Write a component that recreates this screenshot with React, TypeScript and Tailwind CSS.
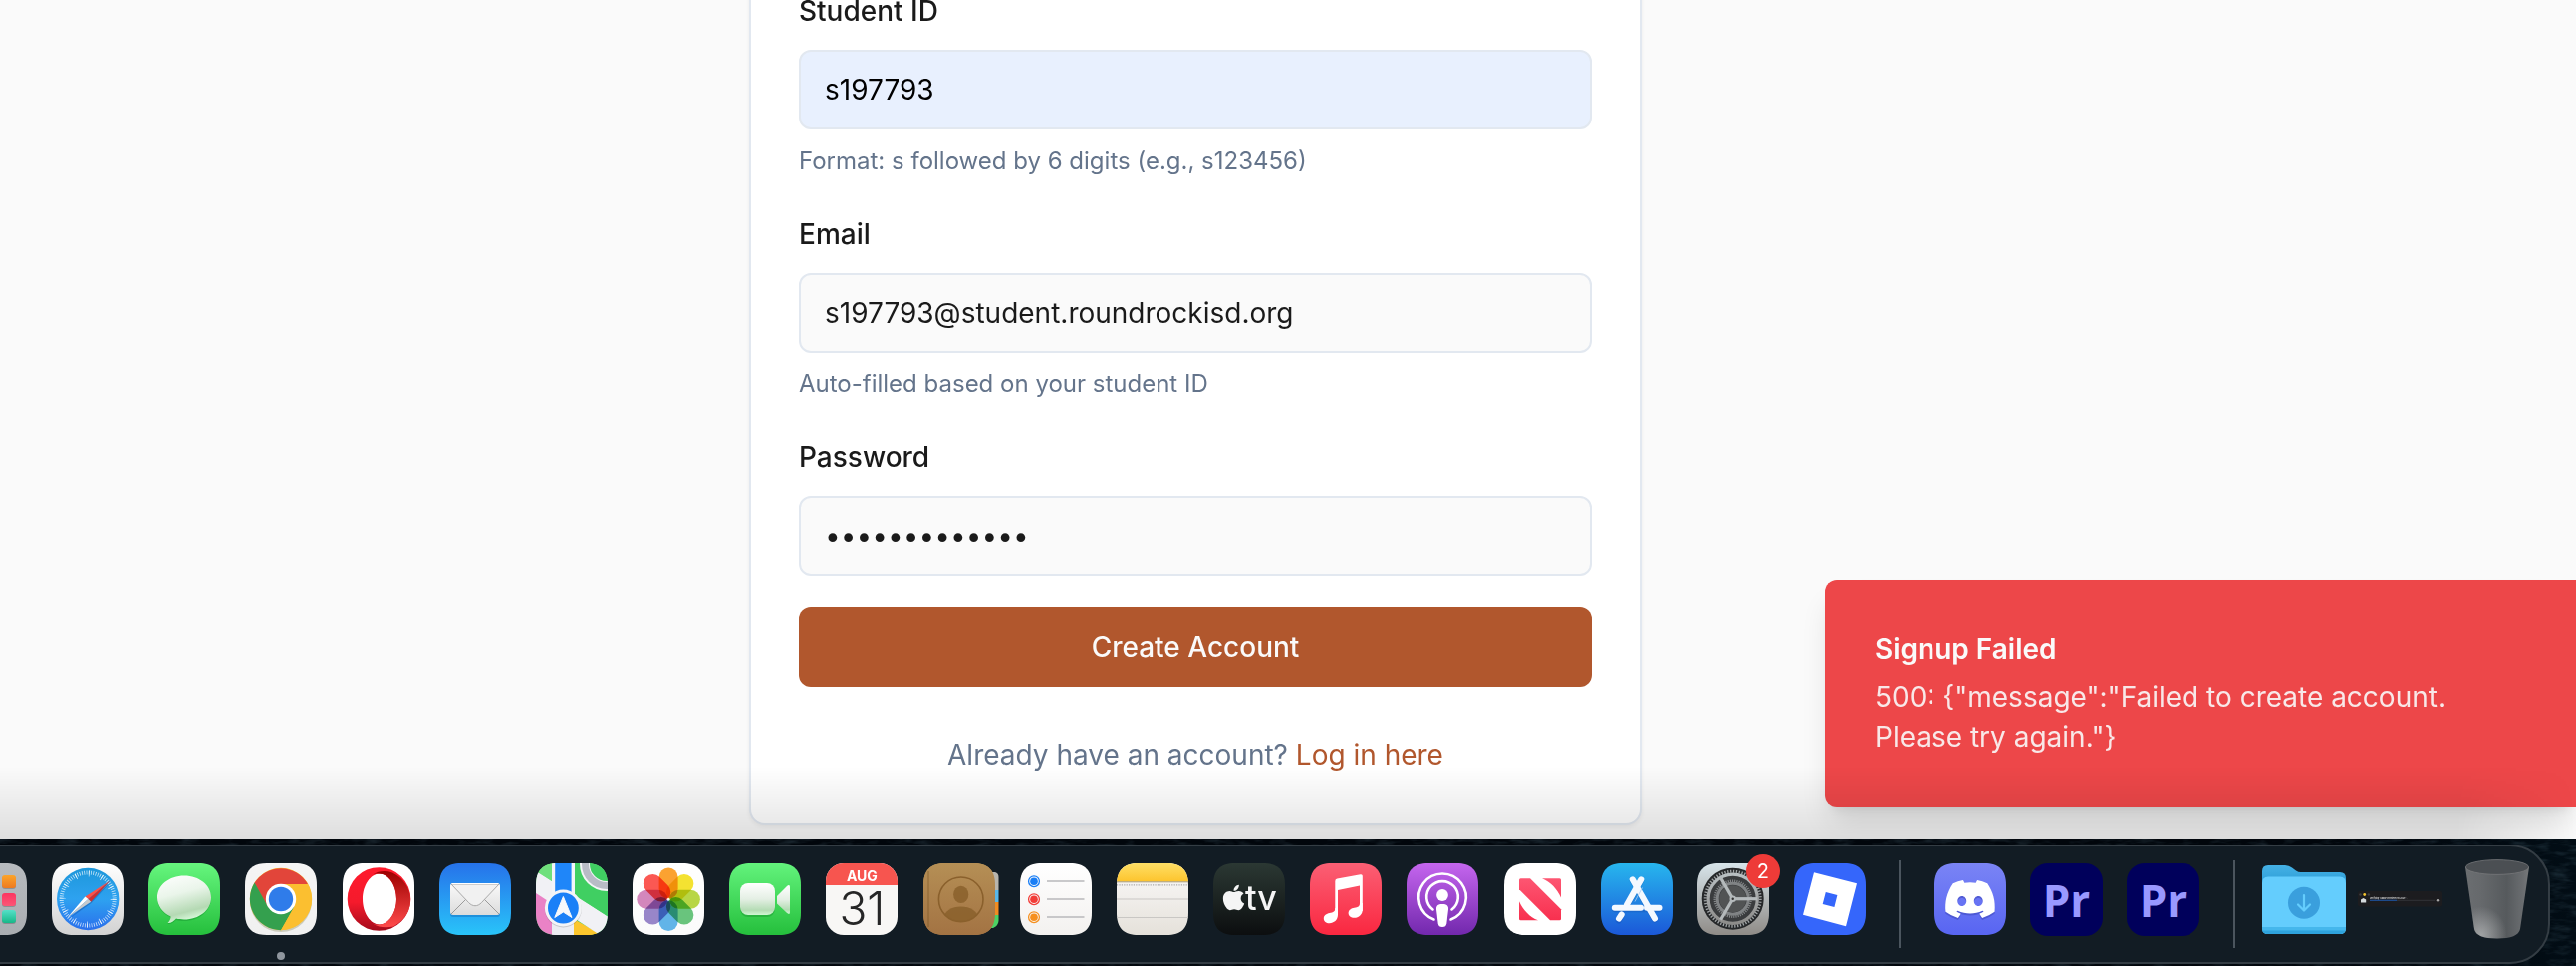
import type { ReactNode } from "react";
import { FaApple, FaDiscord } from "react-icons/fa";

const squircle =
  "M22 0H50C65 0 72 7 72 22V50C72 65 65 72 50 72H22C7 72 0 65 0 50V22C0 7 7 0 22 0Z";

function Grad({ id, from, to, mid }: { id: string; from: string; to: string; mid?: string }) {
  return (
    <linearGradient id={id} x1="0" y1="0" x2="0" y2="1">
      <stop offset="0" stopColor={from} />
      {mid && <stop offset="0.5" stopColor={mid} />}
      <stop offset="1" stopColor={to} />
    </linearGradient>
  );
}

function Tile({ id, from, to, children }: { id: string; from: string; to: string; children?: ReactNode }) {
  return (
    <svg viewBox="0 0 72 72" className="block size-[72px] overflow-visible" aria-hidden="true">
      <defs>
        <Grad id={`${id}-bg`} from={from} to={to} />
        <clipPath id={`${id}-clip`}>
          <path d={squircle} />
        </clipPath>
      </defs>
      <path d={squircle} fill={`url(#${id}-bg)`} />
      {children}
    </svg>
  );
}

function DockItem({ name, children }: { name: string; children: ReactNode }) {
  return (
    <button type="button" aria-label={name} className="relative block shrink-0">
      {children}
    </button>
  );
}

function Launchpad() {
  const cells = [
    ["#4fb3ff", "#2f7df0", 11, 12], ["#6be06f", "#2fb84a", 29, 12], ["#fba42a", "#ee7a1f", 47, 12],
    ["#f0f0f0", "#cfcfcf", 11, 30], ["#b07cf5", "#7b45dc", 29, 30], ["#fb3560", "#fb5676", 47, 30],
    ["#ff6b5c", "#e83a30", 11, 47], ["#ffd84d", "#f5b81e", 29, 47], ["#55e0c8", "#17b888", 47, 47],
  ] as const;
  return (
    <Tile id="lp" from="#b7bbbf" to="#a9adb1">
      {cells.map(([a, b, x, y], i) => (
        <g key={i}>
          <Grad id={`lp${i}`} from={a} to={b} />
          <rect x={x} y={y + 1} width="14" height="13" rx="3" fill="#000" opacity=".2" />
          <rect x={x} y={y} width="14" height="13" rx="3" fill={`url(#lp${i})`} />
        </g>
      ))}
    </Tile>
  );
}

function Safari() {
  return (
    <Tile id="sf" from="#ffffff" to="#d2d2d2">
      <Grad id="sf1" from="#1d97da" mid="#2ea2f0" to="#2a6fec" />
      <circle cx="36.2" cy="36" r="31.2" fill="url(#sf1)" />
      <circle cx="36.2" cy="36" r="26.5" fill="none" stroke="#fff" strokeOpacity=".75" strokeWidth="4" strokeDasharray="0.8 1.51" />
      <circle cx="36.2" cy="36" r="25.5" fill="none" stroke="#fff" strokeOpacity=".8" strokeWidth="6" strokeDasharray="0.8 12.55" />
      <path d="M17 56L39.5 40 59 19Z" fill="#0a3f8f" opacity=".35" />
      <path d="M58.4 17.6L33.4 33.4 36.4 36Z" fill="#ff5148" />
      <path d="M58.4 17.6L36.4 36 39.2 38.8Z" fill="#cf3030" />
      <path d="M15.6 54.6L33.4 33.4 36.4 36Z" fill="#ffffff" />
      <path d="M15.6 54.6L36.4 36 39.2 38.8Z" fill="#c6c9cc" />
    </Tile>
  );
}

function Messages() {
  return (
    <Tile id="ms" from="#66f67e" to="#25bf3c">
      <linearGradient id="ms1" x1="0" y1="0" x2=".3" y2="1">
        <stop offset="0" stopColor="#fff" />
        <stop offset=".45" stopColor="#eaf5ea" />
        <stop offset=".85" stopColor="#b4d9b3" />
        <stop offset="1" stopColor="#d4f5d6" />
      </linearGradient>
      <path d="M36 14C51 14 63 23 63 35.500S51 58 36 58C33 58 30 57.600 28 57C25.500 59.500 22.500 61.500 19.500 61C21.500 59 22.600 56.500 22.600 54.600C14.500 51 9 43.500 9 35.500C9 23 21 14 36 14Z" fill="#0a7a22" opacity=".3" />
      <path d="M36 12.500C51 12.500 63 22 63 34.500S51 56.500 36 56.500C33 56.500 30 56.200 28 55.600C25.500 58.500 22.500 60.400 19.500 60C21.500 58 22.600 55.500 22.600 53.500C14.500 50 9 42.500 9 34.500C9 22 21 12.500 36 12.500Z" fill="url(#ms1)" />
    </Tile>
  );
}

function Chrome() {
  return (
    <Tile id="ch" from="#f5f5f5" to="#f0f0f0">
      <circle cx="36" cy="38" r="31" fill="#5b5b20" opacity=".25" />
      <circle cx="36" cy="36" r="31.200" fill="#fbbf30" />
      <path d="M36 21H62.900A31.200 31.200 0 0 0 9.200 20.200L23 44Z" fill="#e2453a" />
      <path d="M9.600 19.500A31.200 31.200 0 0 0 36 67.200L49.500 43.500 36 46 23 43.500Z" fill="#34a04e" />
      <path d="M36 67.200L49.500 43.500A15 15 0 0 0 49 29L36 21H63A31.200 31.200 0 0 1 36 67.200Z" fill="#fbbf30" />
      <circle cx="36" cy="36" r="15.200" fill="#fff" />
      <circle cx="36" cy="36" r="12.200" fill="#2f7cea" />
    </Tile>
  );
}

function Opera() {
  return (
    <Tile id="op" from="#ffffff" to="#ffffff">
      <linearGradient id="op1" x1="0" y1="0" x2="0" y2="1">
        <stop offset="0" stopColor="#ff1b2d" />
        <stop offset=".55" stopColor="#f51a2c" />
        <stop offset="1" stopColor="#a40a1b" />
      </linearGradient>
      <Grad id="op2" from="#9c0000" to="#ff4b4b" />
      <path fillRule="evenodd" fill="url(#op1)" d="M36.500 4.200A31.800 31.800 0 1 0 36.500 67.800A31.800 31.800 0 1 0 36.500 4.200ZM37 10.500C46 10.500 54 22 54 36S46 61.500 37 61.500S20 50 20 36S28 10.500 37 10.500Z" />
      <path fill="url(#op2)" d="M30 11.500C36 7.500 43 7.200 50 9.500C72 20 76 50 51 63.600C43 65 36 64.500 30 60.500C33 62 37 62 40 61C48 58.500 54 48.500 54 36S48 13.500 40 11C37 10.200 33 10 30 11.500Z" />
    </Tile>
  );
}

function Mail() {
  return (
    <Tile id="ml" from="#2672ea" to="#29c4f9">
      <Grad id="ml1" from="#fafafa" to="#dcdcdc" />
      <rect x="11" y="22" width="50" height="32" rx="3" fill="#0b4da0" opacity=".3" />
      <rect x="11" y="20" width="50" height="32" rx="3" fill="url(#ml1)" />
      <path d="M12 51L28 35M60 51L44 35" stroke="#9b9b9b" strokeWidth="1" />
      <path d="M12 21L29.500 39.500C33.500 43.800 38.500 43.800 42.500 39.500L60 21Z" fill="#f1f1f1" stroke="#a9a9a9" strokeWidth="1" />
      <path d="M12.500 20.500H59.500" stroke="#fff" strokeWidth="1" />
    </Tile>
  );
}

function Maps() {
  return (
    <Tile id="mp" from="#7be487" to="#34c759">
      <g clipPath="url(#mp-clip)">
        <path d="M0 26L20 40V72H0Z" fill="#ea82c6" />
        <path d="M38 56L66 72H38Z" fill="#fcc62d" />
        <path d="M0 8L16 18 72 53V72H64L0 30Z" fill="#f1f1f5" />
        <path d="M0 0H16V18L0 7.500Z" fill="#6fe07c" />
        <path d="M39 0H72V53.500L39 32Z" fill="#40cf62" />
        <path d="M16 36H39V72H16Z" fill="#ecedf2" />
        <path d="M38 58V72H64Z" fill="#fcc62d" />
        <path d="M16 0H39V40H16Z" fill="#f3f4f8" />
        <path d="M19.200 0H35.600V40H19.200Z" fill="#1f86f9" />
        <circle cx="71" cy="1" r="22" fill="none" stroke="#f3f4f6" strokeWidth="10" />
        <circle cx="71" cy="1" r="21.500" fill="none" stroke="#b9bcc6" strokeWidth="7" />
        <circle cx="27.400" cy="46" r="18.500" fill="#333" opacity=".2" />
      </g>
      <circle cx="27.400" cy="45" r="18.500" fill="#f3f4f7" />
      <circle cx="27.400" cy="45" r="15.400" fill="#1b80f7" />
      <path d="M27.400 33.500L36 54.500 27.400 49 18.800 54.500Z" fill="#f6f8fb" strokeLinejoin="round" stroke="#f6f8fb" strokeWidth="1" />
    </Tile>
  );
}

function Photos() {
  const petals = ["#fb9a1f", "#f3e01f", "#b2d235", "#5cbf72", "#55aee6", "#8f7cc4", "#cf7db6", "#fb4a44"];
  return (
    <Tile id="ph" from="#ffffff" to="#fbfbfb">
      <g className="isolate">
        {petals.map((c, i) => (
          <rect key={c} x="26.600" y="4.500" width="19" height="31" rx="9.500" fill={c} fillOpacity=".92" transform={`rotate(${i * 45} 36.100 36.300)`} className="mix-blend-multiply" />
        ))}
      </g>
      <circle cx="36.100" cy="36.300" r="1.500" fill="#fff" opacity=".8" />
    </Tile>
  );
}

function FaceTime() {
  return (
    <Tile id="ft" from="#63f37c" to="#25bf3c">
      <linearGradient id="ft1" x1="0" y1="0" x2="0" y2="1">
        <stop offset="0" stopColor="#fff" />
        <stop offset=".5" stopColor="#e4efe4" />
        <stop offset=".85" stopColor="#b4dcb4" />
        <stop offset="1" stopColor="#cff7d3" />
      </linearGradient>
      <rect x="11" y="22" width="35" height="32" rx="8" fill="#0a7a22" opacity=".3" />
      <rect x="11" y="20" width="35" height="32" rx="8" fill="url(#ft1)" />
      <path d="M48 33L57.500 23.500Q61 20.500 61 24V49Q61 52.500 57.500 49.500L48 40.500Z" fill="url(#ft1)" />
    </Tile>
  );
}

function CalendarIcon() {
  return (
    <div className="flex size-[72px] flex-col overflow-hidden rounded-[18px] bg-[#f8f7f5] text-center">
      <div className="h-[22px] bg-[#f7554f] pt-[3px] text-[14px] leading-[20px] font-bold text-white">AUG</div>
      <div className="pt-[1px] text-[46px] leading-[44px] font-light text-[#262626]">31</div>
    </div>
  );
}

function Contacts() {
  return (
    <Tile id="ct" from="#b58f55" to="#a37343">
      <path d="M66 9H72Q75.500 10 75.500 14V27H66Z" fill="#b8b5ae" />
      <path d="M66 27H75.500V39H66Z" fill="#58b8ea" />
      <path d="M66 39H75.500V52H66Z" fill="#f08c22" />
      <path d="M66 52H75.500V58Q75 63 70 65H66Z" fill="#4cd264" />
      <path d={squircle} fill="url(#ct-bg)" />
      <path d="M5 8V64" stroke="#6e4a1d" strokeOpacity=".35" strokeWidth="1.500" />
      <clipPath id="ct2"><circle cx="37.700" cy="36.300" r="22" /></clipPath>
      <g fill="#8a602c" fillOpacity=".85">
        <ellipse cx="37.700" cy="31.400" rx="7.600" ry="8.600" />
        <ellipse cx="37.700" cy="54.500" rx="17" ry="11" clipPath="url(#ct2)" />
      </g>
      <circle cx="37.700" cy="36.300" r="22.300" fill="none" stroke="#8a602c" strokeWidth="1.600" />
    </Tile>
  );
}

function Reminders() {
  return (
    <Tile id="rm" from="#ffffff" to="#f3f1ef">
      {(["#1a7ef5", "#f23d38", "#f6901f"] as const).map((c, i) => (
        <g key={c}>
          <circle cx="14" cy={18.2 + i * 18} r="5.400" fill="none" stroke={c} strokeWidth="1.300" />
          <circle cx="14" cy={18.2 + i * 18} r="3.800" fill={c} />
          <path d={`M27 ${18 + i * 18}H64.500`} stroke="#b9b9bb" strokeWidth="1.600" />
        </g>
      ))}
    </Tile>
  );
}

function Notes() {
  return (
    <Tile id="nt" from="#fbfafa" to="#e5e1da">
      <Grad id="nt1" from="#fedf66" to="#fdc42d" />
      <g clipPath="url(#nt-clip)">
        <rect width="72" height="18.500" fill="url(#nt1)" />
        <path d="M0 18.800H72" stroke="#a79a77" strokeWidth="1" />
        <path d="M0 21.800H72" stroke="#a9a9a9" strokeWidth="1.200" strokeDasharray="1.200 1.200" />
        <path d="M0 36H72M0 54.500H72" stroke="#c9c7c4" strokeWidth="1" />
      </g>
    </Tile>
  );
}

function AppleTV() {
  return (
    <Tile id="tv" from="#2b3833" to="#0c0e0f">
      <FaApple x="6" y="20" size={29} color="#f5f5f5" />
      <text x="32" y="47" fontSize="34" fontWeight="500" fill="#f5f5f5">tv</text>
    </Tile>
  );
}

function Music() {
  return (
    <Tile id="mu" from="#fb5f74" to="#fa2740">
      <g fill="#fff">
        <path d="M25.300 18Q25.300 16 27.300 15.600L50.700 11.200Q52.800 10.900 52.800 12.800V48H50V22.600L28 27V52H25.300Z" />
        <path d="M52.800 40V46.500C52.800 51.500 49 54.800 44.500 54.800C41 54.800 38.600 52.800 38.600 50C38.600 46.800 41.500 45.200 44.500 44.700C48.500 44 50 43.500 50 40Z" />
        <path d="M28 45V51.800C28 57 24 60.200 19.600 60.200C16.200 60.200 13.800 58.200 13.800 55.400C13.800 52.200 16.600 50.600 19.600 50C23.700 49.200 25.300 48.700 25.300 45Z" />
      </g>
    </Tile>
  );
}

function Podcasts() {
  return (
    <Tile id="pc" from="#c566ee" to="#7228ad">
      <g fill="none" stroke="#fff" strokeWidth="2.600" strokeLinecap="round">
        <path d="M27.500 56.500A23.800 23.800 0 1 1 44.500 56.500" />
        <path d="M26.500 46.500A15.800 15.800 0 1 1 45.500 46.500" />
      </g>
      <circle cx="36" cy="32" r="5.900" fill="#fff" />
      <path d="M36 41C40.500 41 42.400 42.800 42 46.500L40.300 60.500Q39.800 64 36 64Q32.200 64 31.700 60.500L30 46.500C29.600 42.800 31.500 41 36 41Z" fill="#fff" />
    </Tile>
  );
}

function News() {
  return (
    <Tile id="nw" from="#ffffff" to="#ffffff">
      <linearGradient id="nw1" gradientUnits="userSpaceOnUse" x1="0" y1="15" x2="0" y2="57">
        <stop offset="0" stopColor="#fd5672" />
        <stop offset="1" stopColor="#f8304f" />
      </linearGradient>
      <g fill="url(#nw1)">
        <path d="M16.500 15.300H26L57 46.300V55.800Q57 57.300 55.500 57.300H46L15 26.300V16.800Q15 15.300 16.500 15.300Z" />
        <path d="M38 15.300H55.500Q57 15.300 57 16.800V34.500C53 25.500 46.500 19 38 15.300Z" />
        <path d="M15 38.200V55.800Q15 57.300 16.500 57.300H34C25.500 53.800 19 47.200 15 38.200Z" />
      </g>
    </Tile>
  );
}

function AppStore() {
  return (
    <Tile id="as" from="#27b6ee" to="#1b58d8">
      <g stroke="#0b3f9a" strokeOpacity=".25" strokeWidth="6" strokeLinecap="round" transform="translate(0 1.500)">
        <path d="M14 44.700H58M31.700 16L54 55M40.300 16L26 41M20.500 51.500L17.800 56" />
      </g>
      <g stroke="#f4f9ff" strokeWidth="6" strokeLinecap="round">
        <path d="M46 44.700H58.500" />
        <path d="M31.700 16.300L54 55.500" />
        <path d="M40.300 16.300L26 41.500" />
        <path d="M20.700 51.500L18 55.600" />
        <path d="M13.800 44.700H40" />
      </g>
      <path d="M34 38.500L41.500 24.500" stroke="#a9cdf3" strokeWidth=".8" />
    </Tile>
  );
}

function Settings() {
  return (
    <Tile id="st" from="#d7e4ea" to="#8f8b87">
      <Grad id="st1" from="#b9bfc2" to="#8d8c8a" />
      <g fill="none">
        <circle cx="35.700" cy="35.700" r="31" fill="#26282a" />
        <circle cx="35.700" cy="35.700" r="27.500" stroke="#a0a4a6" strokeWidth="3" strokeDasharray="1.300 1.580" />
        <circle cx="35.700" cy="35.700" r="24.600" fill="#3a3c3e" stroke="url(#st1)" strokeWidth="3.200" />
        <circle cx="35.700" cy="35.700" r="18" stroke="#85888a" strokeWidth="2.400" strokeDasharray="1.100 1.100" />
        <circle cx="35.700" cy="35.700" r="15.500" stroke="#808385" strokeWidth="3" />
        <circle cx="35.700" cy="35.700" r="13.500" fill="#515354" />
        <g stroke="#b4b9bb" strokeWidth="3.200">
          <path d="M35.700 35.700H60" />
          <path d="M35.700 35.700L23.500 14.600" />
          <path d="M35.700 35.700L23.500 56.800" />
        </g>
        <circle cx="35.700" cy="35.700" r="3.200" fill="#b4b9bb" />
        <circle cx="35.700" cy="35.700" r="1.200" fill="#333" />
      </g>
    </Tile>
  );
}

function Roblox() {
  return (
    <Tile id="rb" from="#3566fb" to="#3566fb">
      <path fillRule="evenodd" fill="#fff" d="M20 9.300L63 20.300 52 63.300 9 51.800ZM31.800 29L28.700 41 40.400 44 43.400 32Z" />
    </Tile>
  );
}

function Discord() {
  return (
    <Tile id="dc" from="#7a84f5" to="#5865f2">
      <FaDiscord x="9" y="11" size={54} color="#3b45b8" opacity=".5" />
      <FaDiscord x="9" y="9" size={54} color="#ffffff" />
    </Tile>
  );
}

function Premiere() {
  return (
    <div className="flex size-[73px] items-center justify-center rounded-[18px] bg-[#00005b] font-['Open_Sans',sans-serif] text-[44px] leading-[72px] font-bold text-[#9999ff]">
      Pr
    </div>
  );
}

function Folder() {
  return (
    <svg viewBox="0 0 84 70" className="mt-[2px] block h-[70px] w-[84px]" aria-hidden="true">
      <Grad id="fd1" from="#45b1e5" to="#1e92cf" />
      <path d="M0 20V6Q0 0 6 0H23Q27 0 30 2.500L34 5.500Q36 7 39 7H78Q84 7 84 13V30H0Z" fill="url(#fd1)" />
      <path d="M0 18Q0 11.500 6 11.500H78Q84 11.500 84 18V63Q84 69 78 69H6Q0 69 0 63Z" fill="#64cdfd" />
      <path d="M0 62H84V63Q84 69 78 69H6Q0 69 0 63Z" fill="#45b7ec" />
      <path d="M0 65.500H83.500Q82 69 78 69H6Q1.500 69 0 65.500Z" fill="#2fa3dd" />
      <circle cx="42" cy="37.700" r="16" fill="#3a9fdd" />
      <path d="M42 30V45M36 39.500L42 45.500 48 39.500" fill="none" stroke="#64cdfd" strokeWidth="2.200" strokeLinecap="round" strokeLinejoin="round" />
    </svg>
  );
}

function MiniWindow() {
  return (
    <svg viewBox="0 0 84 16" className="mt-[28px] block h-[16px] w-[84px]" aria-hidden="true">
      <rect width="84" height="15.500" rx="2" fill="#1c1c1f" />
      <circle cx="2.500" cy="3.500" r="1.200" fill="#3d3d40" />
      <circle cx="6.700" cy="3.500" r="1.400" fill="#f2c230" />
      <circle cx="10.900" cy="3.500" r="1.200" fill="#3d3d40" />
      <path d="M3 11.500V8.500L5.500 7L8.200 8.500V11.500Z" fill="#d5dadd" />
      <text x="12" y="7.500" fontSize="2" fontWeight="700" fill="#d8d8d8">Verifying “Adobe Premiere Pro 2025”...</text>
      <path d="M12 9.300H77" stroke="#333438" strokeWidth="1" />
      <path d="M12 9.300H39" stroke="#1c4f96" strokeWidth="1.200" />
      <circle cx="80" cy="9.300" r="1.200" fill="#a8a8a8" />
    </svg>
  );
}

function Trash() {
  return (
    <svg viewBox="0 0 64 80" className="-mt-1 block h-[80px] w-[64px]" aria-hidden="true">
      <linearGradient id="tr1" x1="0" y1="0" x2="1" y2="0">
        <stop offset="0" stopColor="#6b6e71" />
        <stop offset=".25" stopColor="#66696c" />
        <stop offset=".65" stopColor="#565a5d" />
        <stop offset=".9" stopColor="#6a6d70" />
        <stop offset="1" stopColor="#77797b" />
      </linearGradient>
      <radialGradient id="tr2" cx=".25" cy=".95" r=".4">
        <stop offset="0" stopColor="#b9bbbc" stopOpacity=".7" />
        <stop offset="1" stopColor="#b9bbbc" stopOpacity="0" />
      </radialGradient>
      <path d="M0 8L9 70Q11 79.500 32 79.500T55 70L64 8Z" fill="url(#tr1)" />
      <path d="M0 8L9 70Q11 79.500 32 79.500T55 70L64 8Z" fill="url(#tr2)" />
      <ellipse cx="32" cy="8" rx="31.600" ry="7.400" fill="#4b4f53" stroke="#77797b" strokeWidth=".8" />
    </svg>
  );
}

function Divider() {
  return <div className="-mt-[3px] h-[88px] w-[2px] shrink-0 bg-[#4b555e]" />;
}

const field =
  "mt-[14px] block h-20 w-full rounded-[12px] border-2 border-[#e2e8f0] px-6 text-[28px] leading-10 outline-none";
const labelStyle = "block text-[28px] leading-[50px] font-medium text-[#1a1a1a]";
const hint = "mt-4 text-[24px] leading-8 text-[#64748b]";

const errorText = '500: {"message":"Failed to create account. Please try again."}';

export default function App() {
  return (
    <div className="relative flex min-h-screen flex-col overflow-hidden bg-[#fafafa] font-[Inter,sans-serif]">
      <main className="relative flex flex-1 justify-center overflow-hidden pr-[186px] pb-[14px]">
        <form
          className="-mt-16 w-full max-w-[896px] self-start rounded-[16px] border-2 border-[#e2e8f0] bg-white p-12 shadow-[0_2px_4px_rgba(0,0,0,0.06)]"
          onSubmit={(e) => e.preventDefault()}
        >
          <div className="flex flex-col gap-8">
            <div>
              <label htmlFor="student-id" className={labelStyle}>Student ID</label>
              <input id="student-id" defaultValue="s197793" className={`${field} bg-[#e8f0fe] text-black`} />
              <p className={hint}>Format: s followed by 6 digits (e.g., s123456)</p>
            </div>
            <div>
              <label htmlFor="email" className={labelStyle}>Email</label>
              <input id="email" type="email" defaultValue="s197793@student.roundrockisd.org" className={`${field} bg-[#fafafa] text-[#1a1a1a]`} />
              <p className={hint}>Auto-filled based on your student ID</p>
            </div>
            <div>
              <label htmlFor="password" className={labelStyle}>Password</label>
              <input id="password" type="password" defaultValue="longhorns2025" className={`${field} bg-[#fafafa] text-[#1a1a1a]`} />
            </div>
            <button type="submit" className="h-20 w-full rounded-[12px] bg-[#b1572d] text-[28px] leading-10 font-medium text-[#fafafa]">
              Create Account
            </button>
          </div>
          <p className="mt-12 text-center text-[28px] leading-10 text-[#64748b]">
            Already have an account? <a href="#login" className="text-[#b1572d]">Log in here</a>
          </p>
        </form>

        <div
          role="alert"
          className="absolute right-0 bottom-8 w-[754px] rounded-l-[12px] border-2 border-r-0 border-[#ed4749] bg-[#ed4749] p-12 text-[28px] leading-10 text-[#fafafa] shadow-[0_20px_30px_-6px_rgba(0,0,0,0.12),0_8px_12px_-8px_rgba(0,0,0,0.12)]"
        >
          <div className="font-semibold">Signup Failed</div>
          <div className="mt-2 max-w-[640px] opacity-90">{errorText}</div>
        </div>

        <div className="pointer-events-none absolute inset-x-0 bottom-0 h-[72px] bg-linear-to-b from-transparent to-black/11 mask-r-from-[calc(100%-120px)]" />
      </main>

      <footer className="relative bg-linear-to-r from-[#01060c] from-90% to-[#020d15] pt-[6px] pr-[26px] pb-[2px]">
        <svg className="absolute inset-0 size-full" aria-hidden="true">
          <filter id="sea">
            <feTurbulence type="fractalNoise" baseFrequency=".05 .18" numOctaves="3" seed="4" />
            <feColorMatrix values="0 0 0 0 .1  0 0 0 0 .19  0 0 0 0 .25  1.600 0 0 0 -.7" />
          </filter>
          <rect width="100%" height="100%" filter="url(#sea)" opacity=".35" />
        </svg>
        <div className="relative -ml-[47px] flex h-[120px] items-start rounded-r-[40px] border-2 border-[#343d44] bg-[#121c24] pt-[17px] pr-[19px]">
          <div className="flex flex-1 items-start justify-between">
            <DockItem name="Launchpad"><Launchpad /></DockItem>
            <DockItem name="Safari"><Safari /></DockItem>
            <DockItem name="Messages"><Messages /></DockItem>
            <DockItem name="Chrome">
              <Chrome />
              <span className="absolute -bottom-[25px] left-8 size-2 rounded-full bg-[#8f969e]" />
            </DockItem>
            <DockItem name="Opera"><Opera /></DockItem>
            <DockItem name="Mail"><Mail /></DockItem>
            <DockItem name="Maps"><Maps /></DockItem>
            <DockItem name="Photos"><Photos /></DockItem>
            <DockItem name="FaceTime"><FaceTime /></DockItem>
            <DockItem name="Calendar"><CalendarIcon /></DockItem>
            <DockItem name="Contacts"><Contacts /></DockItem>
            <DockItem name="Reminders"><Reminders /></DockItem>
            <DockItem name="Notes"><Notes /></DockItem>
            <DockItem name="TV"><AppleTV /></DockItem>
            <DockItem name="Music"><Music /></DockItem>
            <DockItem name="Podcasts"><Podcasts /></DockItem>
            <DockItem name="News"><News /></DockItem>
            <DockItem name="App Store"><AppStore /></DockItem>
            <DockItem name="System Settings">
              <Settings />
              <span className="absolute -top-[9px] -right-[11px] flex size-[34px] items-center justify-center rounded-full bg-[#ee3b38] text-[20px] leading-none text-white">2</span>
            </DockItem>
            <DockItem name="Roblox"><Roblox /></DockItem>
          </div>
          <div className="ml-[33px] flex items-start gap-[34px]">
            <Divider />
            <div className="flex items-start gap-6">
              <DockItem name="Discord"><Discord /></DockItem>
              <DockItem name="Premiere Pro"><Premiere /></DockItem>
              <DockItem name="Premiere Pro"><Premiere /></DockItem>
            </div>
            <Divider />
          </div>
          <div className="ml-[27px] flex items-start">
            <DockItem name="Downloads"><Folder /></DockItem>
            <div className="ml-3"><DockItem name="Minimized window"><MiniWindow /></DockItem></div>
            <div className="ml-6"><DockItem name="Trash"><Trash /></DockItem></div>
          </div>
        </div>
      </footer>
    </div>
  );
}
